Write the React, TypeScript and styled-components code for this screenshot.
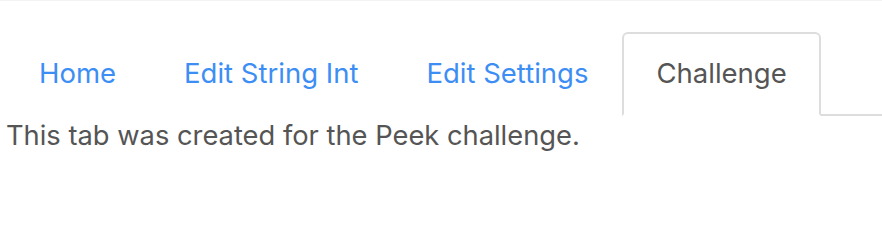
import React, { useState } from 'react';
import styled, { createGlobalStyle } from 'styled-components';

const GlobalStyle = createGlobalStyle`
  html, body {
    margin: 0;
    padding: 0;
    background: #fff;
  }
  body {
    font-family: Inter, "Noto Sans", "Liberation Sans", sans-serif;
    color: #555;
  }
`;

const Page = styled.div`
  padding: 31px 0 0 4px;
  border-top: 1px solid #f3f3f3;
`;

const TabList = styled.ul`
  display: flex;
  margin: 0 0 0 2px;
  padding: 0;
  list-style: none;
  border-bottom: 2px solid #ddd;
`;

const TabItem = styled.li`
  margin-bottom: -2px;
  &:first-child {
    margin-left: -1px;
  }
`;

const TabLink = styled.a<{ active: boolean }>`
  display: block;
  padding: 18px 32px 20px;
  font-size: 27.5px;
  line-height: 42px;
  text-decoration: none;
  cursor: pointer;
  border: 2px solid ${p => (p.active ? '#ddd' : 'transparent')};
  border-bottom-color: ${p => (p.active ? '#fff' : 'transparent')};
  border-radius: 6px 6px 0 0;
  background: #fff;
  color: ${p => (p.active ? '#555' : '#3d8ef4')};
`;

const Content = styled.p`
  margin: 0 0 0 2px;
  font-size: 27.3px;
  line-height: 40px;
  color: #555;
`;

const tabs = ['Home', 'Edit String Int', 'Edit Settings', 'Challenge'];

const App: React.FC = () => {
  const [active, setActive] = useState('Challenge');
  return (
    <Page>
      <GlobalStyle />
      <TabList>
        {tabs.map(tab => (
          <TabItem key={tab}>
            <TabLink active={active === tab} onClick={() => setActive(tab)}>
              {tab}
            </TabLink>
          </TabItem>
        ))}
      </TabList>
      <Content>This tab was created for the Peek challenge.</Content>
    </Page>
  );
};

export default App;
